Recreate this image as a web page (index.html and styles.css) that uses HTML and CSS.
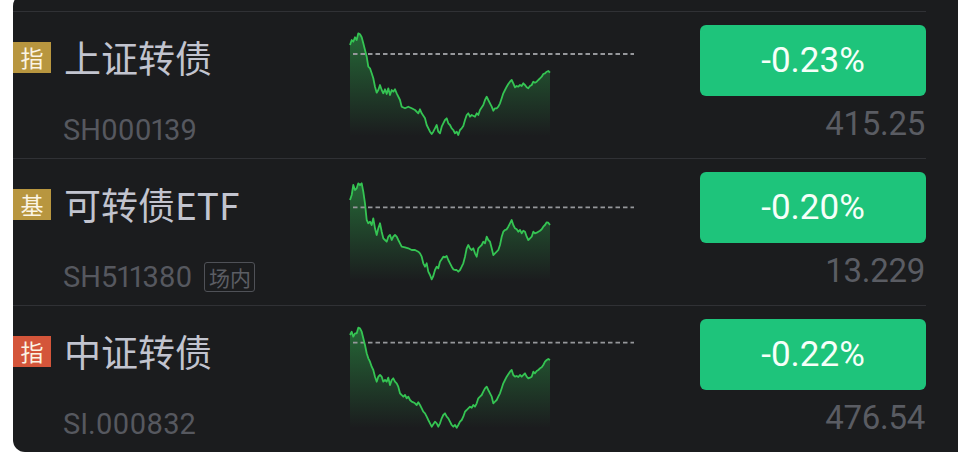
FILE: index.html
```html
<!DOCTYPE html>
<html lang="zh">
<head>
<meta charset="utf-8">
<link rel="stylesheet" href="styles.css">
</head>
<body>
<div class="panel">
  <div class="row">
    <div class="info">
      <div class="title"><span class="badge gold">指</span><span class="name">上证转债</span></div>
      <div class="code">SH000139</div>
    </div>
    <svg class="chart" width="287" height="146" viewBox="349 12 287 146">
      <defs><linearGradient id="g1" x1="0" y1="0" x2="0" y2="1"><stop offset="0" stop-color="#2fb34f" stop-opacity="0.5"/><stop offset="1" stop-color="#2fb34f" stop-opacity="0"/></linearGradient></defs>
      <path class="area" fill="url(#g1)" d="M350,45 L351.7,40 L353.3,41.7 L355,37.3 L356.7,40 L358.3,33.3 L360,34.3 L361.7,37.3 L363.3,43.3 L366.7,56.7 L368.3,66.7 L370,68.3 L371.7,73.3 L373.3,78.3 L375,86.7 L376.7,92.7 L378.3,90 L380,85 L381.7,90 L383.3,93.3 L385,89.3 L386.7,94 L388.3,88.3 L390,95 L391.7,90 L393.3,91.7 L395,89.3 L396.7,93.3 L400,100 L401.7,106.7 L405,108.3 L408.3,106.7 L411.7,108.3 L415,110 L418.3,113.3 L420,109.3 L421.7,113.3 L425,118.3 L426.7,125 L430,131.7 L431.7,134 L433.3,131.7 L435,128.3 L436.7,125 L438.3,131.7 L440,133.3 L441.7,126.7 L443.3,123.3 L445,120 L446.7,118.3 L448.3,123.3 L450,125 L451.7,128.3 L453.3,130 L455,133.3 L456.7,131.7 L458.3,135 L460,130 L461.7,128.3 L463.3,126 L465,120 L466.7,115 L468.3,113.3 L470,116.7 L471.7,115 L475,116.7 L476.7,113.3 L478.3,115 L480,110 L483.3,105 L485,100 L486.7,96.7 L488.3,100 L490,103.3 L491.7,106.7 L493.3,110.7 L495,108.3 L496.7,108.3 L498.3,106.7 L500,103.3 L501.7,98.3 L503.3,93.3 L505,90 L506.7,86.7 L508.3,84 L510,81.7 L511.7,80 L513.3,83.3 L515,87.3 L516.7,86 L518.3,86.7 L520,85 L521.7,86 L523.3,83.3 L525,85 L526.7,87.3 L528.3,88.3 L530,86 L531.7,85 L533.3,81.7 L535,82.7 L536.7,81.7 L538.3,80 L540,78.3 L541.7,76.7 L543.3,74 L545,73.3 L546.7,71.7 L548.3,71 L550,72.7 L550,136 L350,136 Z"/>
      <line class="base" x1="353" y1="54" x2="634" y2="54"/>
      <path class="line" d="M350,45 L351.7,40 L353.3,41.7 L355,37.3 L356.7,40 L358.3,33.3 L360,34.3 L361.7,37.3 L363.3,43.3 L366.7,56.7 L368.3,66.7 L370,68.3 L371.7,73.3 L373.3,78.3 L375,86.7 L376.7,92.7 L378.3,90 L380,85 L381.7,90 L383.3,93.3 L385,89.3 L386.7,94 L388.3,88.3 L390,95 L391.7,90 L393.3,91.7 L395,89.3 L396.7,93.3 L400,100 L401.7,106.7 L405,108.3 L408.3,106.7 L411.7,108.3 L415,110 L418.3,113.3 L420,109.3 L421.7,113.3 L425,118.3 L426.7,125 L430,131.7 L431.7,134 L433.3,131.7 L435,128.3 L436.7,125 L438.3,131.7 L440,133.3 L441.7,126.7 L443.3,123.3 L445,120 L446.7,118.3 L448.3,123.3 L450,125 L451.7,128.3 L453.3,130 L455,133.3 L456.7,131.7 L458.3,135 L460,130 L461.7,128.3 L463.3,126 L465,120 L466.7,115 L468.3,113.3 L470,116.7 L471.7,115 L475,116.7 L476.7,113.3 L478.3,115 L480,110 L483.3,105 L485,100 L486.7,96.7 L488.3,100 L490,103.3 L491.7,106.7 L493.3,110.7 L495,108.3 L496.7,108.3 L498.3,106.7 L500,103.3 L501.7,98.3 L503.3,93.3 L505,90 L506.7,86.7 L508.3,84 L510,81.7 L511.7,80 L513.3,83.3 L515,87.3 L516.7,86 L518.3,86.7 L520,85 L521.7,86 L523.3,83.3 L525,85 L526.7,87.3 L528.3,88.3 L530,86 L531.7,85 L533.3,81.7 L535,82.7 L536.7,81.7 L538.3,80 L540,78.3 L541.7,76.7 L543.3,74 L545,73.3 L546.7,71.7 L548.3,71 L550,72.7"/>
    </svg>
    <div class="quote">
      <div class="pill">-0.23%</div>
      <div class="price">415.25</div>
    </div>
  </div>

  <div class="row">
    <div class="info">
      <div class="title"><span class="badge gold">基</span><span class="name">可转债ETF</span></div>
      <div class="code">SH511380<span class="tag">场内</span></div>
    </div>
    <svg class="chart" width="287" height="146" viewBox="349 159 287 146">
      <defs><linearGradient id="g2" x1="0" y1="0" x2="0" y2="1"><stop offset="0" stop-color="#2fb34f" stop-opacity="0.5"/><stop offset="1" stop-color="#2fb34f" stop-opacity="0"/></linearGradient></defs>
      <path class="area" fill="url(#g2)" d="M350,200 L351.7,195 L353.3,185 L355,190 L356.7,188.3 L358.3,183.3 L360,185 L361.7,183.3 L363.3,191.7 L365,203.3 L366.7,220 L368.3,223.3 L370,221.7 L371.7,225 L373.3,218.3 L375,228.3 L376.7,235 L378.3,228.3 L380,223.3 L381.7,231.7 L383.3,238.3 L385,240 L386.7,241.7 L388.3,236.7 L390,235 L391.7,240 L393.3,236.7 L395,235 L396.7,236.7 L398.3,240 L400,243.3 L401.7,246.7 L405,247.3 L408.3,248.3 L411.7,250 L415,250 L418.3,251.7 L420,253.3 L421.7,256.7 L423.3,263.3 L425,266.7 L426.7,263.3 L428.3,271.7 L430,275 L431.7,279.3 L433.3,276 L435,270 L436.7,266.7 L438.3,268.3 L440,261.7 L441.7,259.3 L443.3,256.7 L445,257.3 L446.7,256 L448.3,260 L450,263.3 L451.7,266.7 L453.3,269.3 L455,270 L456.7,270 L458.3,271.7 L460,270 L461.7,266.7 L463.3,263.3 L465,256.7 L466.7,248.3 L468.3,245 L470,248.3 L471.7,250 L473.3,248.3 L475,253.3 L476.7,256.7 L478.3,248.3 L480,246.7 L481.7,245 L483.3,241.7 L485,243.3 L486.7,236.7 L488.3,240 L490,241.7 L491.7,248.3 L493.3,255 L495,253.3 L496.7,251.7 L498.3,250 L500,245 L501.7,236.7 L503.3,231.7 L505,230 L506.7,229.3 L508.3,226.7 L510,223.3 L511.7,220 L513.3,225 L515,228.3 L516.7,229.3 L518.3,231.7 L520,230 L521.7,233.3 L523.3,230.7 L525,231.7 L526.7,236.7 L528.3,240 L530,238.3 L531.7,236.7 L533.3,231.7 L535,233.3 L536.7,232.7 L538.3,231.7 L540,230.7 L541.7,229.3 L543.3,226.7 L545,225 L546.7,222.3 L548.3,222.7 L550,225 L550,281 L350,281 Z"/>
      <line class="base" x1="353" y1="207.3" x2="634" y2="207.3"/>
      <path class="line" d="M350,200 L351.7,195 L353.3,185 L355,190 L356.7,188.3 L358.3,183.3 L360,185 L361.7,183.3 L363.3,191.7 L365,203.3 L366.7,220 L368.3,223.3 L370,221.7 L371.7,225 L373.3,218.3 L375,228.3 L376.7,235 L378.3,228.3 L380,223.3 L381.7,231.7 L383.3,238.3 L385,240 L386.7,241.7 L388.3,236.7 L390,235 L391.7,240 L393.3,236.7 L395,235 L396.7,236.7 L398.3,240 L400,243.3 L401.7,246.7 L405,247.3 L408.3,248.3 L411.7,250 L415,250 L418.3,251.7 L420,253.3 L421.7,256.7 L423.3,263.3 L425,266.7 L426.7,263.3 L428.3,271.7 L430,275 L431.7,279.3 L433.3,276 L435,270 L436.7,266.7 L438.3,268.3 L440,261.7 L441.7,259.3 L443.3,256.7 L445,257.3 L446.7,256 L448.3,260 L450,263.3 L451.7,266.7 L453.3,269.3 L455,270 L456.7,270 L458.3,271.7 L460,270 L461.7,266.7 L463.3,263.3 L465,256.7 L466.7,248.3 L468.3,245 L470,248.3 L471.7,250 L473.3,248.3 L475,253.3 L476.7,256.7 L478.3,248.3 L480,246.7 L481.7,245 L483.3,241.7 L485,243.3 L486.7,236.7 L488.3,240 L490,241.7 L491.7,248.3 L493.3,255 L495,253.3 L496.7,251.7 L498.3,250 L500,245 L501.7,236.7 L503.3,231.7 L505,230 L506.7,229.3 L508.3,226.7 L510,223.3 L511.7,220 L513.3,225 L515,228.3 L516.7,229.3 L518.3,231.7 L520,230 L521.7,233.3 L523.3,230.7 L525,231.7 L526.7,236.7 L528.3,240 L530,238.3 L531.7,236.7 L533.3,231.7 L535,233.3 L536.7,232.7 L538.3,231.7 L540,230.7 L541.7,229.3 L543.3,226.7 L545,225 L546.7,222.3 L548.3,222.7 L550,225"/>
    </svg>
    <div class="quote">
      <div class="pill">-0.20%</div>
      <div class="price">13.229</div>
    </div>
  </div>

  <div class="row">
    <div class="info">
      <div class="title"><span class="badge red">指</span><span class="name">中证转债</span></div>
      <div class="code">SI.000832</div>
    </div>
    <svg class="chart" width="287" height="146" viewBox="349 306 287 146">
      <defs><linearGradient id="g3" x1="0" y1="0" x2="0" y2="1"><stop offset="0" stop-color="#2fb34f" stop-opacity="0.5"/><stop offset="1" stop-color="#2fb34f" stop-opacity="0"/></linearGradient></defs>
      <path class="area" fill="url(#g3)" d="M350,335 L351.7,331.7 L353.3,336.7 L355,333.3 L356.7,333.3 L358.3,327.7 L360,328.3 L361.7,331.7 L363.3,338.3 L365,345 L366.7,353.3 L368.3,358.3 L370,361.7 L371.7,366.7 L373.3,370 L375,376.7 L376.7,381.7 L378.3,376.7 L380,375 L381.7,376.7 L383.3,381.7 L385,380 L386.7,381.7 L388.3,377.7 L390,385 L391.7,380 L393.3,378.3 L395,381.7 L396.7,383.3 L398.3,386.7 L400,393.3 L401.7,395 L403.3,396.7 L405,395 L406.7,398.3 L408.3,396.7 L410,400 L411.7,401.7 L413.3,402.3 L415,403.3 L416.7,405 L418.3,402.3 L420,405 L421.7,408.3 L423.3,411.7 L425,413.3 L426.7,416.7 L428.3,420 L430,423.3 L431.7,426.7 L433.3,424.3 L435,421.7 L436.7,423.3 L438.3,426.7 L440,423.3 L441.7,418.3 L443.3,415 L445,413.3 L446.7,416.7 L448.3,418.3 L450,421.7 L451.7,425 L453.3,426.7 L455,425 L456.7,427.7 L458.3,425 L460,421.7 L461.7,420 L463.3,416.7 L465,411.7 L466.7,410 L468.3,408.3 L470,406.7 L471.7,407.7 L473.3,405 L475,406.7 L476.7,403.3 L478.3,398.3 L480,396.7 L481.7,395 L483.3,391.7 L485,388.3 L486.7,386.7 L488.3,390 L490,393.3 L491.7,396.7 L493.3,403.3 L495,401.7 L496.7,400 L498.3,396.7 L500,393.3 L501.7,388.3 L503.3,383.3 L505,380 L506.7,376.7 L508.3,374.3 L510,371.7 L511.7,370 L513.3,375 L515,376.7 L516.7,376 L518.3,377 L520,375 L521.7,376.7 L523.3,375 L525,373.3 L526.7,376.7 L528.3,378.3 L530,377.7 L531.7,376.7 L533.3,371.7 L535,373.3 L536.7,371 L538.3,370 L540,368.3 L541.7,367.3 L543.3,365 L545,361.7 L546.7,360 L548.3,359 L550,360 L550,428 L350,428 Z"/>
      <line class="base" x1="353" y1="342.7" x2="634" y2="342.7"/>
      <path class="line" d="M350,335 L351.7,331.7 L353.3,336.7 L355,333.3 L356.7,333.3 L358.3,327.7 L360,328.3 L361.7,331.7 L363.3,338.3 L365,345 L366.7,353.3 L368.3,358.3 L370,361.7 L371.7,366.7 L373.3,370 L375,376.7 L376.7,381.7 L378.3,376.7 L380,375 L381.7,376.7 L383.3,381.7 L385,380 L386.7,381.7 L388.3,377.7 L390,385 L391.7,380 L393.3,378.3 L395,381.7 L396.7,383.3 L398.3,386.7 L400,393.3 L401.7,395 L403.3,396.7 L405,395 L406.7,398.3 L408.3,396.7 L410,400 L411.7,401.7 L413.3,402.3 L415,403.3 L416.7,405 L418.3,402.3 L420,405 L421.7,408.3 L423.3,411.7 L425,413.3 L426.7,416.7 L428.3,420 L430,423.3 L431.7,426.7 L433.3,424.3 L435,421.7 L436.7,423.3 L438.3,426.7 L440,423.3 L441.7,418.3 L443.3,415 L445,413.3 L446.7,416.7 L448.3,418.3 L450,421.7 L451.7,425 L453.3,426.7 L455,425 L456.7,427.7 L458.3,425 L460,421.7 L461.7,420 L463.3,416.7 L465,411.7 L466.7,410 L468.3,408.3 L470,406.7 L471.7,407.7 L473.3,405 L475,406.7 L476.7,403.3 L478.3,398.3 L480,396.7 L481.7,395 L483.3,391.7 L485,388.3 L486.7,386.7 L488.3,390 L490,393.3 L491.7,396.7 L493.3,403.3 L495,401.7 L496.7,400 L498.3,396.7 L500,393.3 L501.7,388.3 L503.3,383.3 L505,380 L506.7,376.7 L508.3,374.3 L510,371.7 L511.7,370 L513.3,375 L515,376.7 L516.7,376 L518.3,377 L520,375 L521.7,376.7 L523.3,375 L525,373.3 L526.7,376.7 L528.3,378.3 L530,377.7 L531.7,376.7 L533.3,371.7 L535,373.3 L536.7,371 L538.3,370 L540,368.3 L541.7,367.3 L543.3,365 L545,361.7 L546.7,360 L548.3,359 L550,360"/>
    </svg>
    <div class="quote">
      <div class="pill">-0.22%</div>
      <div class="price">476.54</div>
    </div>
  </div>
</div>
</body>
</html>
```

FILE: styles.css
```css
html, body {
  margin: 0;
  padding: 0;
  background: #ffffff;
  overflow: hidden;
  width: 958px;
  height: 457px;
}

.panel {
  margin: -6px 0 0 13px;
  padding-top: 17px;
  width: 945px;
  box-sizing: border-box;
  padding-right: 32px;
  background: #1b1c1e;
  border-radius: 12px 0 0 12px;
}

.row {
  display: flex;
  align-items: flex-start;
  height: 146px;
  border-top: 1px solid #303135;
}

.info {
  width: 336px;
  flex: none;
  padding-top: 25px;
}

.title {
  display: flex;
  align-items: center;
  height: 40px;
}

.badge {
  width: 38px;
  height: 31px;
  display: flex;
  align-items: center;
  justify-content: center;
  font-family: "Noto Sans CJK SC", sans-serif;
  font-size: 23px;
  color: #fbf4e4;
  margin-right: 13px;
}

.badge.gold { background: #b8963f; }
.badge.red { background: #d4553a; }

.name {
  font-family: "Noto Sans CJK SC", sans-serif;
  font-size: 37px;
  line-height: 40px;
  color: #c2c4cf;
}

.code {
  margin-top: 36px;
  margin-left: 50px;
  font-family: Roboto, sans-serif;
  font-size: 29px;
  line-height: 34px;
  color: #56585f;
  font-variant-numeric: proportional-nums;
  display: flex;
  align-items: center;
}

.tag {
  margin-left: 12px;
  width: 51px;
  height: 30px;
  box-sizing: border-box;
  border: 1.5px solid #4f5157;
  border-radius: 3px;
  font-family: "Noto Sans CJK SC", sans-serif;
  font-size: 21px;
  line-height: 26px;
  color: #5c5e64;
  display: flex;
  align-items: center;
  justify-content: center;
}

.chart {
  flex: none;
  display: block;
}

.chart .line {
  fill: none;
  stroke: #35c453;
  stroke-width: 1.8;
  stroke-linejoin: round;
}

.chart .base {
  stroke: #96979b;
  stroke-width: 1.8;
  stroke-dasharray: 4.5 3;
}

.quote {
  flex: 1;
  display: flex;
  flex-direction: column;
  align-items: flex-end;
  padding-top: 13px;
}

.pill {
  width: 226px;
  height: 71px;
  border-radius: 6px;
  background: #1ec47b;
  color: #f6fff9;
  font-family: Roboto, sans-serif;
  font-size: 35px;
  display: flex;
  align-items: center;
  justify-content: center;
}

.price {
  margin-top: 9px;
  margin-right: 1px;
  font-family: Roboto, sans-serif;
  font-size: 33px;
  line-height: 38px;
  color: #5a5c63;
  letter-spacing: -0.3px;
}
```
